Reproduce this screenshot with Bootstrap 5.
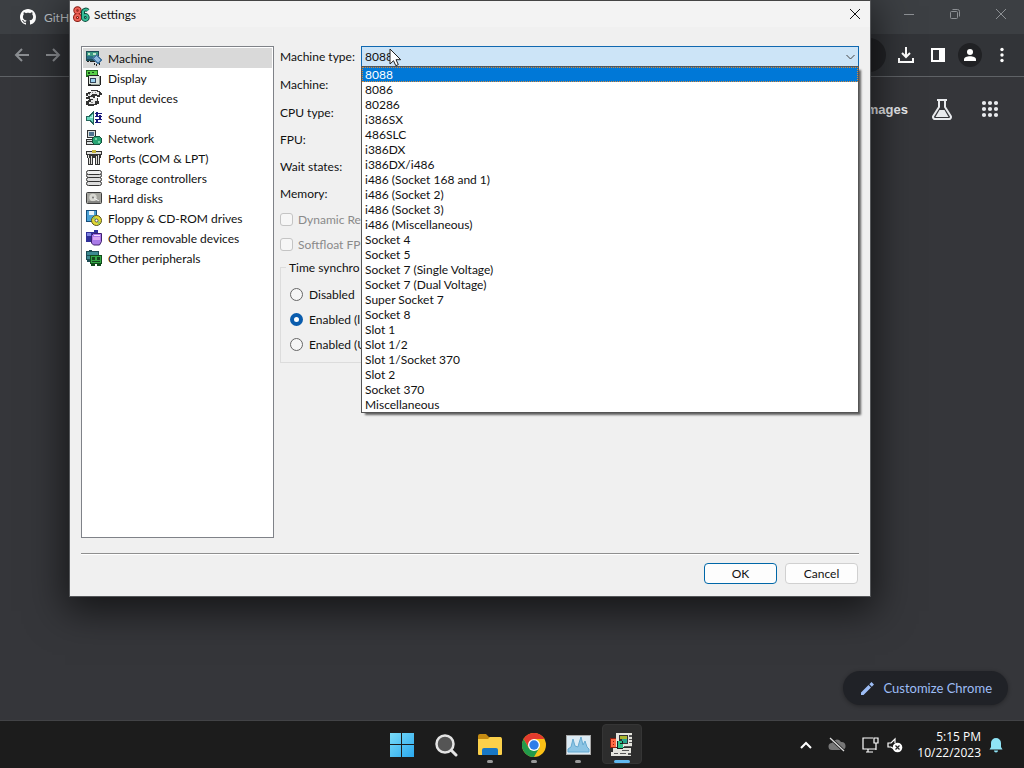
<!DOCTYPE html>
<html lang="en">
<head>
<meta charset="utf-8">
<meta name="viewport" content="width=device-width, initial-scale=1">
<title>Settings</title>
<link href="https://cdn.jsdelivr.net/npm/bootstrap@5.3.0/dist/css/bootstrap.min.css" rel="stylesheet">
<style>
body{font-family:Lato,"Open Sans",sans-serif;font-size:12px;line-height:15px;color:#111;background:#35363a;overflow:hidden}
svg{display:block;flex:none}
button{font:inherit;border:0;background:none;padding:0;color:inherit}
.tab-strip{height:34px;background:#3c3f43;color:#bdc1c6;padding-left:20px}
.tab-strip .win-btn{width:46px;height:28px;display:grid;place-items:center;color:#8d9094}
.tool-strip{height:43px;background:#323438;border-bottom:1px solid #5f6266;padding:0 6px 0 11px}
.tool-strip button{width:32px;height:32px;display:grid;place-items:center;color:#fff}
.tool-strip .dim{color:#8b8e92}
.tool-strip .dim:first-child{width:22px}
.omni-end{width:130px;height:34px;border-radius:17px;background:#222326}
.avatar-dot{width:24px;height:24px;border-radius:50%;background:#202124;display:grid;place-items:center}
.page-links{height:64px;padding-right:24px;gap:24px;color:#e8eaed;font:bold 13px/15px "Liberation Sans",Arial,sans-serif}
.page-links a{color:inherit;text-decoration:none}
.customize{height:34px;border-radius:17px;background:#202227;color:#9dbdf5;padding:0 16px 0 17px;margin:0 16px 15px 0;font-size:13px;box-shadow:0 1px 4px #0005}
.settings-win{position:absolute;left:69px;right:153px;top:0;background:#f0f0f0;border:1px solid #55575a;border-top-color:#444;box-shadow:0 10px 36px 4px #0009}
.caption-bar{height:26px;padding-left:3px;background:#f3f3f3}
.caption-bar button{width:30px;height:26px;display:grid;place-items:center}
.win-body{padding:19px 11px 0 11px}
.page-list{width:193px;min-height:492px;background:#fff;border:1px solid #7f8288;padding:1px;flex:none}
.page-list button{height:20px;width:100%;padding:2px 3px;gap:6px;text-align:left}
.page-list button.active{background:#d9d9d9}
.form-area{padding-left:6px}
.combo-row{height:28px}
.combo-row>label,.combo-row>span{width:81px;flex:none;padding-top:3px}
.short-rows .combo-row{height:27px}
.short-rows .combo-row:last-child{height:24px}
.combo-wrap{position:relative;flex:1}
.combo-wrap select{display:block;width:100%;height:21px;border:1px solid #1068b0;border-radius:0;background:#cce4f7;padding:0 3px;font:inherit;line-height:15px;appearance:none;color:#111;outline:0}
.combo-wrap .arrow{position:absolute;right:4px;top:8px;pointer-events:none}
.drop-list{position:absolute;left:0;right:0;top:20px;z-index:5;background:#fff;border:1px solid #555;box-shadow:3px 3px 2px -1px #0009}
.drop-list button{display:block;width:100%;height:15px;line-height:15px;padding-left:3px;text-align:left}
.drop-list .picked{background:#0078d7;color:#fff;outline:1px dotted #d88a3a;outline-offset:-1px}
.pointer{position:absolute;left:28px;top:2px;z-index:6}
.opt-line{height:25px;gap:5px;white-space:nowrap}
.opt-line input{appearance:none;width:13px;height:13px;margin:0;border:1px solid #777;background:#f6f6f6;flex:none}
.opt-line input[type=radio]{border-radius:50%;border-color:#666}
.opt-line input[type=radio]:checked{border:4px solid #0a5cad;background:#fff}
.opt-line input[type=checkbox]{border-radius:3px;border-color:#c4c4c4}
.off-text{color:#8a8a8a}
.sync-box{border:1px solid #dcdcdc;height:103px;margin-top:3px;padding:0 0 0 9px}
.sync-box legend{float:none;width:auto;margin:0 0 7px -4px;padding:0 3px;font-size:12px;line-height:15px}
.sync-box .opt-line{gap:6px}
.foot-bar{margin-top:15px;border-top:1px solid #8f8f8f;padding:9px 1px 12px;gap:8px;box-shadow:inset 0 1px #fff}
.foot-bar button{width:73px;height:21px;background:#fdfdfd;border:1px solid #d0d0d0;border-radius:4px;color:#111}
.foot-bar .main-btn{border-color:#0067a8}
.task-strip{height:48px;background:#1c1c1c;border-top:1px solid #424346;display:grid;grid-template-columns:1fr auto 1fr;color:#fff}
.task-strip .app{width:44px;height:47px;display:grid;place-items:center;position:relative}
.task-strip .app.run::after{content:"";position:absolute;bottom:5px;width:6px;height:3px;border-radius:2px;background:#9a9a9a}
.task-strip .app.front::before{content:"";position:absolute;inset:3px 2px 4px;background:#2d2d2d;border:1px solid #353535;border-radius:4px}
.task-strip .app.front::after{width:16px;background:#60b8f0}
.task-strip .app svg{position:relative}
.tray{padding-right:21px}
.clock-text{font-family:"Open Sans",sans-serif;line-height:16px;text-align:right;margin-left:14px;white-space:nowrap}
</style>
</head>
<body class="vh-100 d-flex flex-column">
<header>
  <div class="tab-strip d-flex align-items-center">
    <svg width="16" height="16" viewBox="0 0 16 16" fill="#fff"><path d="M8 0C3.58 0 0 3.58 0 8c0 3.54 2.29 6.53 5.47 7.59.4.07.55-.17.55-.38 0-.19-.01-.82-.01-1.49-2.01.37-2.53-.49-2.69-.94-.09-.23-.48-.94-.82-1.13-.28-.15-.68-.52-.01-.53.63-.01 1.08.58 1.23.82.72 1.21 1.87.87 2.33.66.07-.52.28-.87.51-1.07-1.78-.2-3.64-.89-3.64-3.95 0-.87.31-1.59.82-2.15-.08-.2-.36-1.02.08-2.12 0 0 .67-.21 2.2.82.64-.18 1.32-.27 2-.27s1.36.09 2 .27c1.53-1.04 2.2-.82 2.2-.82.44 1.1.16 1.92.08 2.12.51.56.82 1.27.82 2.15 0 3.07-1.87 3.75-3.65 3.95.29.25.54.73.54 1.48 0 1.07-.01 1.93-.01 2.2 0 .21.15.46.55.38A8.01 8.01 0 0 0 16 8c0-4.42-3.58-8-8-8z"/></svg>
    <span class="ms-2">GitHu</span>
    <div class="ms-auto d-flex align-self-start">
      <button class="win-btn" aria-label="Minimize"><svg width="12" height="12" stroke="currentColor"><path d="M1 6.500h10"/></svg></button>
      <button class="win-btn" aria-label="Restore"><svg width="12" height="12" fill="none" stroke="currentColor"><rect x="1.500" y="3.500" width="7" height="7" rx="1"/><path d="M3.500 1.500h5a2 2 0 0 1 2 2v5"/></svg></button>
      <button class="win-btn" aria-label="Close window"><svg width="12" height="12" stroke="currentColor"><path d="M1 1l10 10M11 1L1 11"/></svg></button>
    </div>
  </div>
  <div class="tool-strip d-flex align-items-center">
    <button class="dim" aria-label="Back"><svg width="16" height="14" fill="none" stroke="currentColor" stroke-width="2"><path d="M15 7H2M8 1L2 7l6 6"/></svg></button>
    <button class="dim ms-1" aria-label="Forward"><svg width="16" height="14" fill="none" stroke="currentColor" stroke-width="2"><path d="M1 7h13M8 1l6 6-6 6"/></svg></button>
    <div class="omni-end ms-auto me-1"></div>
    <button aria-label="Downloads"><svg width="18" height="18" fill="none" stroke="currentColor" stroke-width="2"><path d="M9 1v10M5 7l4 4 4-4M2 12v4h14v-4"/></svg></button>
    <button aria-label="Side panel"><svg width="16" height="16" fill="currentColor"><path fill-rule="evenodd" d="M1 1h14v14H1zM3 3v10h6V3z"/></svg></button>
    <button aria-label="Profile"><span class="avatar-dot"><svg width="14" height="14" fill="currentColor"><circle cx="7" cy="4" r="3"/><path d="M1 13v-1.500C1 9.500 4 8.300 7 8.300s6 1.200 6 3.200V13z"/></svg></span></button>
    <button aria-label="More"><svg width="4" height="16" fill="currentColor"><circle cx="2" cy="2.500" r="1.700"/><circle cx="2" cy="8" r="1.700"/><circle cx="2" cy="13.500" r="1.700"/></svg></button>
  </div>
</header>
<main class="flex-grow-1 d-flex flex-column">
  <div class="page-links d-flex align-items-center justify-content-end">
    <a href="#">Images</a>
    <a href="#" aria-label="Labs"><svg width="20" height="22" fill="none" stroke="#e8eaed" stroke-width="2"><path d="M5 2h10M7 2v7L1.300 18a2 2 0 0 0 2 3h13.400a2 2 0 0 0 2-3L13 9V2"/><path d="M7.500 12L3.500 19h13l-4-7z" fill="#e8eaed" stroke="none"/></svg></a>
    <a href="#" aria-label="Apps" class="ms-1"><svg width="20" height="20"><path d="M4 4h0M10 4h0M16 4h0M4 10h0M10 10h0M16 10h0M4 16h0M10 16h0M16 16h0" stroke="#e8eaed" stroke-width="4.200" stroke-linecap="round"/></svg></a>
  </div>
  <button class="customize mt-auto ms-auto d-flex align-items-center gap-2"><svg width="15" height="15" fill="currentColor"><path d="M1 11.500V14h2.500L11 6.500 8.500 4zM9.300 3.200l2.500 2.500L14 3.500 11.500 1z"/></svg><span>Customize Chrome</span></button>
</main>
<footer class="task-strip">
  <div></div>
  <nav class="d-flex" aria-label="Taskbar">
    <button class="app" aria-label="Start"><svg width="24" height="24"><defs><linearGradient id="wg" x2="1" y2="1"><stop stop-color="#7adcf8"/><stop offset="1" stop-color="#2aa8ee"/></linearGradient></defs><path fill="url(#wg)" d="M0 0h11v11H0zM12 0h12v11H12zM0 12h11v12H0zM12 12h12v12H12z"/></svg></button>
    <button class="app" aria-label="Search"><svg width="24" height="24" fill="#555" stroke="#e4e4e4"><circle cx="11" cy="11" r="8.500" stroke-width="2.500"/><path d="M17.500 17.500L22 22" stroke-width="3" stroke-linecap="round"/></svg></button>
    <button class="app run" aria-label="File Explorer"><svg width="26" height="24"><path d="M1 3a2 2 0 0 1 2-2h6l3 3h12v6H1z" fill="#c58b12"/><path d="M1 6h10l2-2h10a2 2 0 0 1 2 2v15a1 1 0 0 1-1 1H2a1 1 0 0 1-1-1z" fill="#fbd04a"/><path d="M5 22v-5a2 2 0 0 1 2-2h12a2 2 0 0 1 2 2v5z" fill="#1877c4"/></svg></button>
    <button class="app run" aria-label="Chrome"><svg width="24" height="24" viewBox="0 0 24 24"><circle cx="12" cy="12" r="12" fill="#fbc116"/><path d="M1.600 6A12 12 0 0 1 22.400 6H12L7 15z" fill="#e33b2e"/><path d="M1.600 6A12 12 0 0 0 12 24l5.200-9L6.800 15z" fill="#229a4b"/><circle cx="12" cy="12" r="6" fill="#fff"/><circle cx="12" cy="12" r="4.700" fill="#2f7de9"/></svg></button>
    <button class="app run" aria-label="Task Manager"><svg width="25" height="20"><rect x=".5" y=".5" width="24" height="19" fill="#dcebf4" stroke="#a8a8a8"/><path d="M2 17v-3l3-2 2-8 2 7 3 1 1-4 2-6 2 8 2-4 2 6 2 2v3z" fill="#8cc4e4" stroke="#65a9d0"/></svg></button>
    <button class="app run front" aria-label="86Box"><svg width="24" height="24" shape-rendering="crispEdges"><path fill="#e4e4de" d="M6 0h16v14H6zM3 15h18v8H1v-4h2z"/><path fill="#333" d="M9 2h9v9H9z"/><path fill="#a9b52e" d="M10 3h7v3h-7z"/><path fill="#27a590" d="M12 6h5v4h-5z"/><path d="M19 2h3v2h-3zM19 6h3v1h-3zM19 9h3v1h-3zM14 13h8v1h-8zM12 17h7v1h-7zM4 20h4v1H4zM10 20h6v1h-6zM18 20h3v2h-3z" fill="#555"/><path fill="#8c1d10" d="M0 5h6v10H0z"/><path fill="#1b1b1b" d="M7 8h6v8H7z"/><g fill="none" stroke-width="1"><path stroke="#ff6a45" stroke-width="2" d="M2 7h3v3H2zM2 10h3v3H2z"/><path stroke="#2fc08a" stroke-width="2" d="M12 9H9v5h3v-2H9"/></g></svg></button>
  </nav>
  <div class="tray d-flex align-items-center justify-content-end">
    <button aria-label="Hidden icons" class="me-3"><svg width="12" height="10" fill="none" stroke="#fff" stroke-width="2"><path d="M1 8l5-5 5 5"/></svg></button>
    <svg class="me-3" width="18" height="16"><path d="M4 13a3.500 3.500 0 0 1 0-7 5 5 0 0 1 9-1 4 4 0 0 1 1 8z" fill="#777"/><path d="M2 1l14 13" stroke="#1c1c1c" stroke-width="3"/><path d="M2 1l14 13" stroke="#ddd" stroke-width="1.300"/></svg>
    <svg class="me-2" width="17" height="18" fill="none" stroke="#fff" stroke-width="1.200"><path d="M11 2H1v11h13v-3M4 16h7M6 13v3M12 2h4v5h-4zM14 7v7"/></svg>
    <svg width="16" height="16" fill="none" stroke="#fff" stroke-width="1.200"><path d="M7 12L4 10H1V6h3l4-4v4"/><circle cx="10.500" cy="10.500" r="4.800" fill="#fff" stroke="none"/><path d="M8.500 8.500l4 4M12.500 8.500l-4 4" stroke="#222"/></svg>
    <div class="clock-text">5:15 PM<br>10/22/2023</div>
    <svg class="ms-2" width="14" height="16" fill="#8fe3f5"><path d="M7 1a5 5 0 0 1 5 5v4l1.500 2.500H.5L2 10V6a5 5 0 0 1 5-5zM5 13.500h4a2 2 0 0 1-4 0z"/></svg>
  </div>
</footer>

<section class="settings-win" role="dialog" aria-labelledby="dlg-title">
  <div class="caption-bar d-flex align-items-center gap-1">
    <svg width="17" height="17" fill="none"><g stroke="#86190f" stroke-width="4"><circle cx="4.500" cy="4.500" r="2.200"/><circle cx="4.500" cy="11.500" r="2.500"/></g><g stroke="#0c4b3c" stroke-width="4"><path d="M15 4.500a3 3 0 0 0-5 1V11"/><circle cx="12.300" cy="11.500" r="2.400"/></g><g stroke="#ee6358" stroke-width="2"><circle cx="4.500" cy="4.500" r="2.200"/><circle cx="4.500" cy="11.500" r="2.500"/></g><g stroke="#37bd97" stroke-width="2"><path d="M15 4.500a3 3 0 0 0-5 1V11"/><circle cx="12.300" cy="11.500" r="2.400"/></g></svg>
    <span id="dlg-title">Settings</span>
    <button class="ms-auto" aria-label="Close"><svg width="12" height="12" stroke="#111"><path d="M1 1l10 10M11 1L1 11"/></svg></button>
  </div>
  <div class="win-body">
    <div class="d-flex">
      <nav class="page-list" aria-label="Settings pages">
        <button class="active d-flex align-items-center"><svg width="16" height="16" shape-rendering="crispEdges"><path fill="#1d4d58" d="M0 1h13v10H0z"/><path fill="#3c9b82" d="M1 2h11v7H1z"/><path fill="#2b6f86" d="M1 6h6v3H1z"/><path fill="#bfe8ce" d="M2 3h2v2H2zM7 3h3v2H7z"/><path fill="#222" d="M1 11h2v1H1zM4 11h5v1H4zM8 13h1v2H8zM10 14h1v2h-1zM13 13h1v2h-1z"/><path fill="#44759f" d="M10 4l6 6-4 4-6-5z"/><path fill="#8fb9dd" d="M10 6l4 4-2 2-4-3z"/></svg>Machine</button>
        <button class="d-flex align-items-center"><svg width="16" height="16" shape-rendering="crispEdges"><path fill="#1d6a1d" d="M0 0h12v7H0z"/><path fill="#58d048" d="M1 1h10v4H1z"/><path fill="#174b1b" d="M2 2h2v2H2zM6 2h2v1H6z"/><path fill="#222" d="M3 5h10v1h2v9h-1v1H2V6h1z"/><path fill="#dce5df" d="M3 6h10v8H3z"/><path fill="#32455a" d="M4 8h6v5H4z"/><path fill="#9ad1ee" d="M5 9h4v3H5z"/><path fill="#8f9b94" d="M13 6h1v9H5v-1h8z"/></svg>Display</button>
        <button class="d-flex align-items-center"><svg width="16" height="16" shape-rendering="crispEdges"><path fill="#333" d="M5 0h7v1h2v1h1v1h1v2h-2v2h-3V6H9v2h3v3h1v3h-2v1H8v1H2v-1H0v-4h2v-1h1V9H0V7h2V6H0V3h2V2h3z"/><path fill="#e9e9e9" d="M5 1h6v1h2v3h-2V4H6v1H5v1H2V4h2V3h1zM4 7h3v1h4v3H9v3H3v-2h2v-2h2V9H4z"/><path fill="#888" d="M3 4h1v1H3zM6 2h1v1H6zM9 2h1v1H9zM5 12h2v1H5z"/></svg>Input devices</button>
        <button class="d-flex align-items-center"><svg width="16" height="16" shape-rendering="crispEdges"><path fill="#23645a" d="M0 6h3l5-6v16l-5-5H0z"/><path fill="#68d5bc" d="M1 7h3l3-4v10l-3-3H1z"/><path fill="#b8f5e4" d="M4 7h2V5l1-1v4H4z"/><path fill="#18187d" d="M9 3h7v1H9zM9 6h7v1H9zM9 9h7v1H9zM9 12h6v1H9zM10 2h2v5h-2zM13 5h2v5h-2zM10 9h2v4h-2z"/></svg>Sound</button>
        <button class="d-flex align-items-center"><svg width="16" height="16" shape-rendering="crispEdges"><path fill="#333" d="M1 0h9v8H1zM0 9h10v6H0z"/><path fill="#d9dfdf" d="M2 1h7v6H2zM1 10h8v1H1zM1 12h8v2H1z"/><path fill="#4f7492" d="M3 2h5v4H3z"/><circle cx="11" cy="10.500" r="5" fill="#14553f"/><circle cx="11" cy="10.500" r="4" fill="#28a574"/><path d="M9 8h2v2H9zM12 11h2v2h-2z" fill="#75d7aa"/></svg>Network</button>
        <button class="d-flex align-items-center"><svg width="16" height="16" shape-rendering="crispEdges"><path fill="#333" d="M0 1h16v4h-1v3h-1v7H9V8H7v7H2V8H1V5H0z"/><path fill="#e0e0dc" d="M1 2h14v2H1zM2 5h1v3H2zM3 8h1v6H3zM5 6h1v8H5zM10 6h1v8h-1zM12 5h1v9h-1z"/><path fill="#c6b43b" d="M6 0h4v3H6z"/></svg>Ports (COM &amp; LPT)</button>
        <button class="d-flex align-items-center"><svg width="16" height="16" fill="#ddd" stroke="#333"><rect x=".5" y="11.500" width="15" height="4" rx="2"/><rect x=".5" y="7.500" width="15" height="4" rx="2"/><rect x=".5" y="3.500" width="15" height="4" rx="2"/><rect x=".5" y=".5" width="15" height="4" rx="2" fill="#eee"/></svg>Storage controllers</button>
        <button class="d-flex align-items-center"><svg width="16" height="16"><rect x=".5" y="2.500" width="15" height="11" rx="1" fill="#a4a49e" stroke="#3d3d3d"/><circle cx="7" cy="7.500" r="3.700" fill="#d8d8d2"/><circle cx="7" cy="7.500" r="1" fill="#777"/><path d="M8 8l5 3" stroke="#eee"/><path d="M2 12h12" stroke="#666"/></svg>Hard disks</button>
        <button class="d-flex align-items-center"><svg width="16" height="16"><path fill="#174f7c" d="M0 0h11v12H0z"/><path fill="#4ba2d6" d="M1 1h9v10H1z"/><path fill="#e7f4fb" d="M3 1h5v4H3z"/><circle cx="10.500" cy="10.500" r="5" fill="#e3d833" stroke="#55521c"/><path d="M10.500 10.500l-4-2 2-2zM10.500 10.500l4 2-2 2z" fill="#83c96d"/><circle cx="10.500" cy="10.500" r="1.500" fill="#fff" stroke="#555"/></svg>Floppy &amp; CD-ROM drives</button>
        <button class="d-flex align-items-center"><svg width="16" height="16"><path fill="#30309a" d="M0 2h8V0h4v12H0z"/><path fill="#7d83e0" d="M1 3h4v3H1z"/><path fill="#a97ae8" d="M5.500 5.500l2-2h8v8l-2 3.500h-6l-2-2z" stroke="#40206f"/><path fill="#dca5f2" d="M7 7h7v3H7z"/><path fill="#f4d9fb" d="M8 5h6v1H8z"/></svg>Other removable devices</button>
        <button class="d-flex align-items-center"><svg width="16" height="16" shape-rendering="crispEdges"><path fill="#1d4c55" d="M0 1h3V0h3v1h7v9H0zM1 10h3v2H1z"/><path fill="#3d8a91" d="M1 2h11v3H1zM1 6h3v3H1z"/><path fill="#114d1c" d="M4 5h12v9H4zM5 14h4v2H5zM11 14h4v2h-4z"/><path fill="#35a746" d="M5 6h10v7H5z"/><path fill="#16451f" d="M6 7h3v3H6zM11 7h3v3h-3zM6 11h8v1H6z"/></svg>Other peripherals</button>
      </nav>
      <form class="form-area flex-grow-1">
        <div class="combo-row d-flex">
          <label for="mtype">Machine type:</label>
          <div class="combo-wrap">
            <select id="mtype"><option>8088</option></select>
            <svg class="arrow" width="9" height="6" fill="none" stroke="#444"><path d="M.5 1l4 4 4-4"/></svg>
            <div class="drop-list">
              <button type="button" class="picked">8088</button>
              <button type="button">8086</button>
              <button type="button">80286</button>
              <button type="button">i386SX</button>
              <button type="button">486SLC</button>
              <button type="button">i386DX</button>
              <button type="button">i386DX/i486</button>
              <button type="button">i486 (Socket 168 and 1)</button>
              <button type="button">i486 (Socket 2)</button>
              <button type="button">i486 (Socket 3)</button>
              <button type="button">i486 (Miscellaneous)</button>
              <button type="button">Socket 4</button>
              <button type="button">Socket 5</button>
              <button type="button">Socket 7 (Single Voltage)</button>
              <button type="button">Socket 7 (Dual Voltage)</button>
              <button type="button">Super Socket 7</button>
              <button type="button">Socket 8</button>
              <button type="button">Slot 1</button>
              <button type="button">Slot 1/2</button>
              <button type="button">Slot 1/Socket 370</button>
              <button type="button">Slot 2</button>
              <button type="button">Socket 370</button>
              <button type="button">Miscellaneous</button>
            </div>
            <svg class="pointer" width="13" height="19"><path d="M1 1v15l3.500-3.300 2.300 5 2.500-1.100L7 11.700h4.700z" fill="#fff" stroke="#222"/></svg>
          </div>
        </div>
        <div class="combo-row d-flex"><span>Machine:</span></div>
        <div class="short-rows">
          <div class="combo-row d-flex"><span>CPU type:</span></div>
          <div class="combo-row d-flex"><span>FPU:</span></div>
          <div class="combo-row d-flex"><span>Wait states:</span></div>
          <div class="combo-row d-flex"><span>Memory:</span></div>
        </div>
        <div class="opt-line d-flex align-items-center off-text"><input type="checkbox" id="dyn" disabled><label for="dyn">Dynamic Re</label></div>
        <div class="opt-line d-flex align-items-center off-text"><input type="checkbox" id="soft" disabled><label for="soft">Softfloat FPU</label></div>
        <fieldset class="sync-box">
          <legend>Time synchro</legend>
          <div class="opt-line d-flex align-items-center"><input type="radio" name="sync" id="s0"><label for="s0">Disabled</label></div>
          <div class="opt-line d-flex align-items-center"><input type="radio" name="sync" id="s1" checked><label for="s1">Enabled (l</label></div>
          <div class="opt-line d-flex align-items-center"><input type="radio" name="sync" id="s2"><label for="s2">Enabled (U</label></div>
        </fieldset>
      </form>
    </div>
    <div class="foot-bar d-flex justify-content-end">
      <button class="main-btn">OK</button>
      <button>Cancel</button>
    </div>
  </div>
</section>
<script src="https://cdn.jsdelivr.net/npm/bootstrap@5.3.0/dist/js/bootstrap.bundle.min.js"></script>
</body>
</html>
